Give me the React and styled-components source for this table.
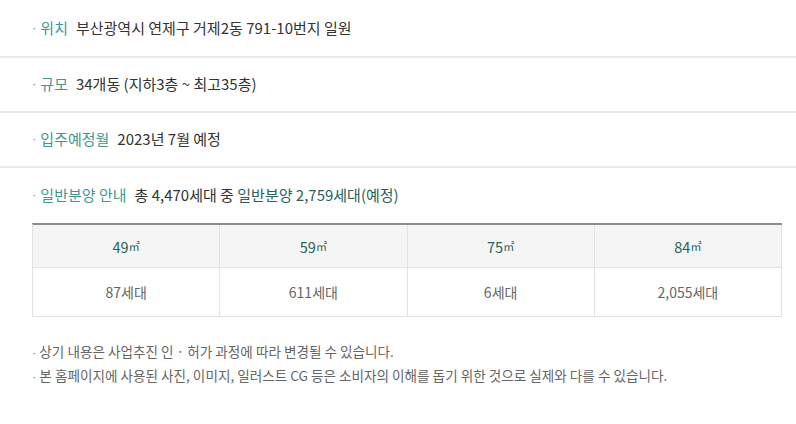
import styled, { createGlobalStyle } from "styled-components";

const GlobalStyle = createGlobalStyle`
  body {
    margin: 0;
    background: #ffffff;
    font-family: "Noto Sans CJK KR", "Noto Sans", sans-serif;
  }
`;

const Container = styled.div`
  width: 796px;
  display: flex;
  flex-direction: column;
`;

const InfoRow = styled.div`
  height: ${(p) => (p.$first ? "58px" : "55px")};
  display: flex;
  align-items: center;
  padding: 0 0 ${(p) => (p.$first ? "1px" : "3px")} 32px;
  border-bottom: ${(p) => (p.$last ? "none" : "2px solid #e9e9e9")};
  box-sizing: border-box;
  font-size: 15px;
`;

const Dot = styled.span`
  font-family: "Liberation Sans", sans-serif;
  color: #888;
  font-size: 13px;
  margin-right: ${(p) => (p.$note ? "3px" : "4px")};
`;

const Label = styled.span`
  color: #3f9893;
  margin-right: 8px;
`;

const Value = styled.span`
  color: #333;
`;

const Strong = styled.span`
  color: #2b5f59;
`;

const Table = styled.div`
  margin: 0 14px 0 32px;
  display: grid;
  grid-template-columns: repeat(4, 1fr);
  border-top: 2px solid #8c8c8c;
  border-left: 1px solid #e2e2e2;
`;

const Cell = styled.div`
  height: ${(p) => (p.$head ? "42px" : "48px")};
  display: flex;
  align-items: center;
  justify-content: center;
  border-right: 1px solid #e2e2e2;
  border-bottom: 1px solid #e2e2e2;
  background: ${(p) => (p.$head ? "#f5f5f5" : "#fff")};
  color: ${(p) => (p.$head ? "#2a605a" : "#666")};
  font-size: ${(p) => (p.$head ? "14.5px" : "14px")};
`;

const Sup = styled.span`
  font-size: 11px;
`;

const Notes = styled.ul`
  list-style: none;
  margin: 23px 0 0 32px;
  padding: 0;
`;

const Note = styled.li`
  font-size: 13.6px;
  line-height: 23px;
  color: #666;
`;

const units = [
  { size: "49", count: "87세대" },
  { size: "59", count: "611세대" },
  { size: "75", count: "6세대" },
  { size: "84", count: "2,055세대" },
];

const notes = [
  "상기 내용은 사업추진 인 · 허가 과정에 따라 변경될 수 있습니다.",
  "본 홈페이지에 사용된 사진, 이미지, 일러스트 CG 등은 소비자의 이해를 돕기 위한 것으로 실제와 다를 수 있습니다.",
];

const App = () => {
  return (
    <Container>
      <GlobalStyle />
      <InfoRow $first>
        <Dot>·</Dot>
        <Label>위치</Label>
        <Value>부산광역시 연제구 거제2동 791-10번지 일원</Value>
      </InfoRow>
      <InfoRow>
        <Dot>·</Dot>
        <Label>규모</Label>
        <Value>34개동 (지하3층 ~ 최고35층)</Value>
      </InfoRow>
      <InfoRow>
        <Dot>·</Dot>
        <Label>입주예정월</Label>
        <Value>2023년 7월 예정</Value>
      </InfoRow>
      <InfoRow $last>
        <Dot>·</Dot>
        <Label>일반분양 안내</Label>
        <Value>
          총 4,470세대 중 <Strong>일반분양 2,759세대(예정)</Strong>
        </Value>
      </InfoRow>
      <Table>
        {units.map((u) => (
          <Cell $head key={"h" + u.size}>
            {u.size}
            <Sup>㎡</Sup>
          </Cell>
        ))}
        {units.map((u) => (
          <Cell key={"b" + u.size}>{u.count}</Cell>
        ))}
      </Table>
      <Notes>
        {notes.map((n) => (
          <Note key={n}>
            <Dot $note>·</Dot>
            {n}
          </Note>
        ))}
      </Notes>
    </Container>
  );
};

export default App;
